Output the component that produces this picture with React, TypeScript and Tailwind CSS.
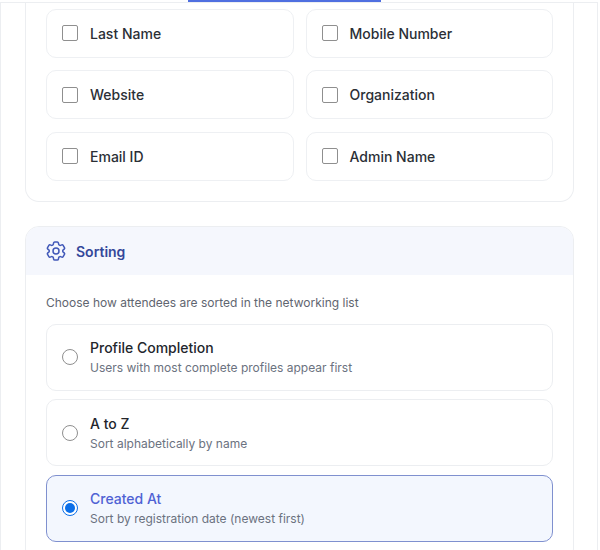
import { HiOutlineCog6Tooth } from "react-icons/hi2";

const fields = [
  ["Last Name", "Mobile Number"],
  ["Website", "Organization"],
  ["Email ID", "Admin Name"],
];

const sortOptions = [
  { title: "Profile Completion", hint: "Users with most complete profiles appear first", active: false },
  { title: "A to Z", hint: "Sort alphabetically by name", active: false },
  { title: "Created At", hint: "Sort by registration date (newest first)", active: true },
];

function FieldCard({ label }: { label: string }) {
  return (
    <label className="flex h-[49px] items-center rounded-[10px] border border-[#eef0f3] bg-white pl-[15px]">
      <span className="h-4 w-4 rounded-[2px] border border-[#8f8f8f] bg-white" />
      <span className="ml-3 text-[14px] font-medium text-[#2b2f36]">{label}</span>
    </label>
  );
}

function SortOption({ title, hint, active }: { title: string; hint: string; active: boolean }) {
  return (
    <label
      className={
        active
          ? "flex h-[67px] items-center rounded-[10px] border border-[#7f90cf] bg-[#f3f7fe] pl-[15px]"
          : "flex h-[67px] items-center rounded-[10px] border border-[#eceef1] bg-white pl-[15px]"
      }
    >
      {active ? (
        <span className="flex h-4 w-4 items-center justify-center rounded-full border border-[#0b6fe8] bg-white">
          <span className="h-[10px] w-[10px] rounded-full bg-[#0b6fe8]" />
        </span>
      ) : (
        <span className="h-4 w-4 rounded-full border border-[#8f8f8f] bg-white" />
      )}
      <span className="ml-3 flex flex-col pt-px">
        <span className={active ? "text-[14px] leading-[20px] font-medium text-[#4f62d4]" : "text-[14px] leading-[20px] font-medium text-[#23262c]"}>
          {title}
        </span>
        <span className="text-[12px] leading-[19px] text-[#6b7280]">{hint}</span>
      </span>
    </label>
  );
}

export default function App() {
  return (
    <div className="relative h-[550px] w-[600px] overflow-hidden bg-white font-['Inter',sans-serif]">
      <div className="absolute left-[188px] top-0 h-[2px] w-[193px] bg-[#4f6fe0]" />
      <div className="mt-[2px] h-[560px] w-[598px] border-l border-r border-t border-[#eceef1] bg-white pl-[24px] pr-[23px]">
        <div className="rounded-b-[14px] border border-t-0 border-[#eceef1] px-5 pt-[5.5px] pb-5">
          <div className="flex flex-col gap-[12.5px]">
            {fields.map((row) => (
              <div key={row[0]} className="grid grid-cols-2 gap-3">
                <FieldCard label={row[0]} />
                <FieldCard label={row[1]} />
              </div>
            ))}
          </div>
        </div>

        <div className="mt-[24.5px] overflow-hidden rounded-[14px] border border-[#eceef1]">
          <div className="flex h-[48px] items-center gap-2 bg-[#f5f7fd] pl-[18px]">
            <HiOutlineCog6Tooth size={24} className="text-[#4158b8]" />
            <span className="text-[14px] font-semibold text-[#34479a]">Sorting</span>
          </div>
          <div className="px-5 pt-[18px] pb-5">
            <p className="text-[12px] leading-[19px] text-[#5f6570]">
              Choose how attendees are sorted in the networking list
            </p>
            <div className="mt-[11.5px] flex flex-col gap-[8.5px]">
              {sortOptions.map((o) => (
                <SortOption key={o.title} title={o.title} hint={o.hint} active={o.active} />
              ))}
            </div>
          </div>
        </div>
      </div>
    </div>
  );
}
